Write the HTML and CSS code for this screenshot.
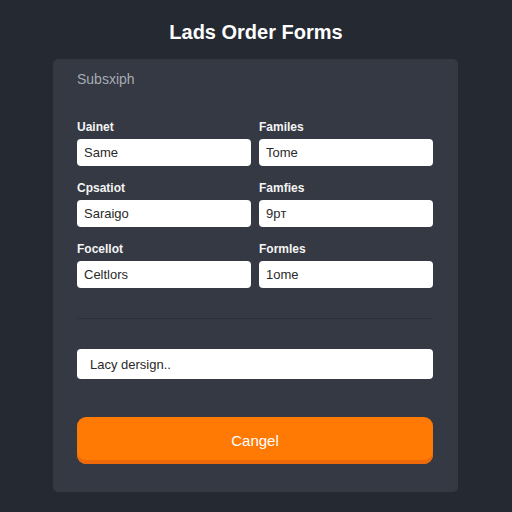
FILE: index.html
```html
<!DOCTYPE html>
<html lang="en">
<head>
  <meta charset="UTF-8" />
  <title>Lads Order Forms</title>
  <link rel="stylesheet" href="styles.css">
</head>
<body>
  <h1>Lads Order Forms</h1>

  <div class="card">
    <p class="subtitle">Subsxiph</p>

    <div class="fields">
      <div class="field">
        <label>Uainet</label>
        <input type="text" value="Same" />
      </div>
      <div class="field">
        <label>Familes</label>
        <input type="text" value="Tome" />
      </div>
      <div class="field">
        <label>Cpsatiot</label>
        <input type="text" value="Saraigo" />
      </div>
      <div class="field">
        <label>Famfies</label>
        <input type="text" value="9pт" />
      </div>
      <div class="field">
        <label>Focellot</label>
        <input type="text" value="Celtlors" />
      </div>
      <div class="field">
        <label>Formles</label>
        <input type="text" value="1ome" />
      </div>
    </div>

    <hr class="divider" />

    <input class="wide" type="text" value="Lacy dersign.." />

    <button class="cancel">Cangel</button>
  </div>
</body>
</html>
```

FILE: styles.css
```css
body {
  font-family: 'Liberation Sans', Arial, sans-serif;
  margin: 0;
  background: #252932;
  color: #222;
  height: 512px;
  overflow: hidden;
}
h1 {
  margin: 0;
  padding-top: 20px;
  height: 59px;
  box-sizing: border-box;
  text-align: center;
  color: #fff;
  font-size: 20px;
  line-height: 24px;
  font-weight: bold;
}
.card {
  margin: 0 54px 0 53px;
  height: 433px;
  box-sizing: border-box;
  background: #343943;
  border-radius: 5px;
  padding: 12px 25px 0 24px;
}
.subtitle {
  margin: 0 0 32px;
  color: #a7abb3;
  font-size: 14px;
  line-height: 16px;
}
.fields {
  display: grid;
  grid-template-columns: 1fr 1fr;
  column-gap: 8px;
  row-gap: 14px;
}
.field label {
  display: block;
  color: #f4f4f4;
  font-size: 12px;
  font-weight: bold;
  line-height: 16px;
  margin-bottom: 4px;
}
input {
  display: block;
  width: 100%;
  box-sizing: border-box;
  height: 27px;
  border: none;
  border-radius: 4px;
  background: #fff;
  padding: 0 7px;
  font-family: inherit;
  font-size: 13px;
  color: #2a2a2a;
}
.divider {
  border: none;
  border-top: 1px solid #2b2f37;
  margin: 30px 0 0;
}
.wide {
  margin-top: 30px;
  height: 30px;
  padding-left: 13px;
}
.cancel {
  display: block;
  width: 100%;
  margin-top: 38px;
  height: 47px;
  border: none;
  border-radius: 9px;
  background: #ff7a05;
  box-shadow: inset 0 -4px 0 #ee6a08;
  color: #fff;
  font-family: inherit;
  font-size: 15px;
  cursor: pointer;
}
```
